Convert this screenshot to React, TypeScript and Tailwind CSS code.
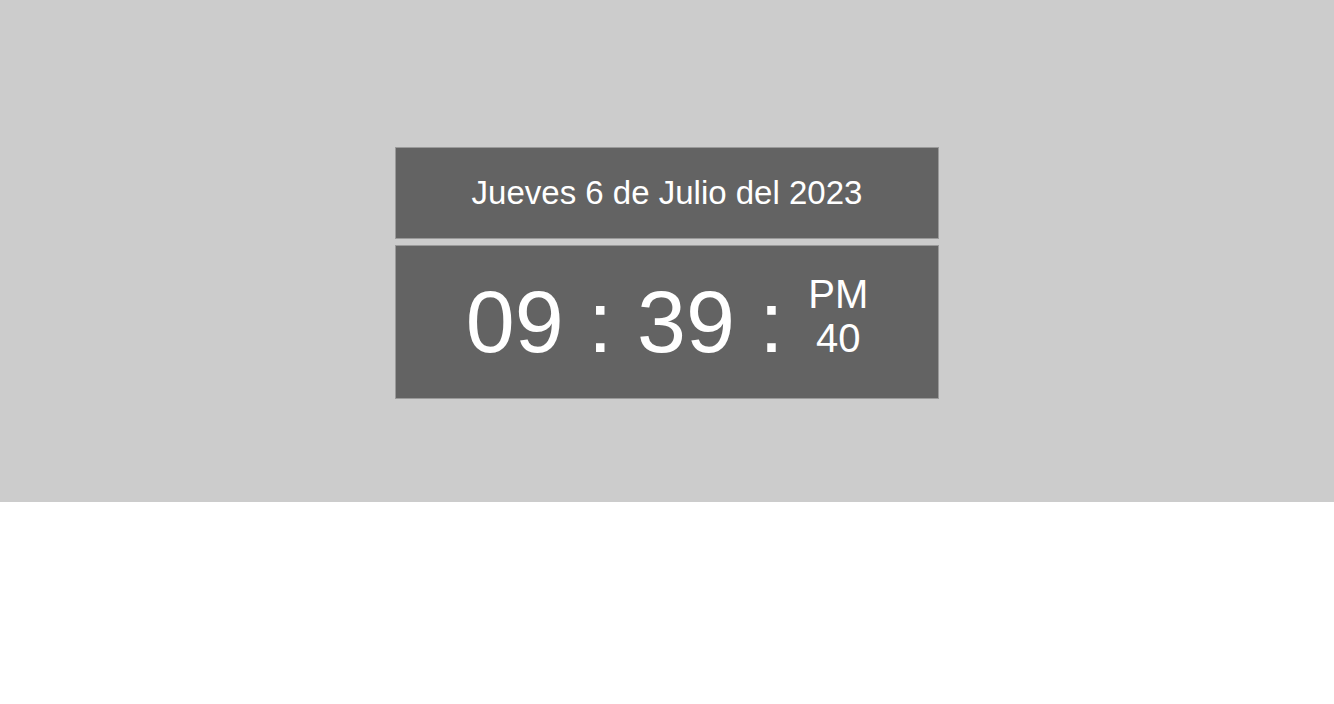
import React from "react";

function Clock() {
  return (
    <div className="flex w-[544px] flex-col gap-[6px] text-white">
      <div className="flex h-[92px] items-center justify-center border border-[#9a9a9a] bg-[#636363]">
        <span className="text-[33px]">Jueves 6 de Julio del 2023</span>
      </div>
      <div className="flex h-[154px] items-center justify-center border border-[#9a9a9a] bg-[#636363]">
        <p className="whitespace-pre text-[88px]">
          {"09 : 39 : "}
          <span className="inline-block text-center align-baseline text-[40px] leading-[44px]">
            PM
            <br />
            40
          </span>
        </p>
      </div>
    </div>
  );
}

export default function App() {
  return (
    <div className="min-h-[704px] bg-white font-['Liberation_Sans',Arial,sans-serif]">
      <div className="flex h-[502px] flex-col items-center bg-[#cccccc] pt-[147px]">
        <Clock />
      </div>
    </div>
  );
}
